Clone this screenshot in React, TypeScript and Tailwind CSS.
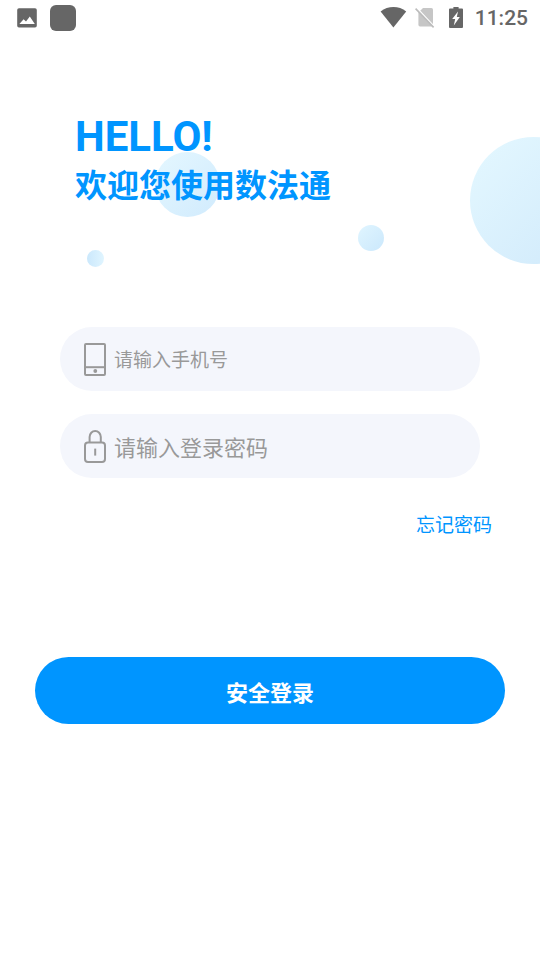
import React, { useState } from 'react';

const StatusBar: React.FC = () => (
  <div className="flex items-center justify-between h-9 pl-4 pr-3 text-[#666666]">
    <div className="flex items-center gap-3">
      <svg className="w-[22px] h-[22px]" viewBox="0 0 22 22" fill="currentColor">
        <path
          fillRule="evenodd"
          d="M3 1.2h16a1.8 1.8 0 0 1 1.8 1.8v15.8a1.8 1.8 0 0 1-1.8 1.8H3a1.8 1.8 0 0 1-1.8-1.8V3A1.8 1.8 0 0 1 3 1.2zM3.4 17h15.4l-5-7.4-3.8 4.8-2.4-2.2z"
        />
      </svg>
      <div className="w-[26px] h-[26px] rounded-md bg-[#666666]" />
    </div>
    <div className="flex items-center">
      <svg className="w-[27px] h-[22px]" viewBox="0 0 27 22" fill="currentColor">
        <path d="M0.6 4.4C8 -1.4 19 -1.4 26.2 4.4L13.4 20.6z" />
      </svg>
      <svg className="w-5 h-[22px] ml-2" viewBox="0 0 20 22">
        <path d="M8 1h8.4a1.6 1.6 0 0 1 1.6 1.6v15.2a1.6 1.6 0 0 1-1.6 1.6H5a1.6 1.6 0 0 1-1.6-1.6V5.4z" fill="#c6c6c6" />
        <path d="M1.8 1L19.2 19.6" stroke="#ffffff" strokeWidth="1.6" />
        <path d="M0.6 1.6L18.6 20.4" stroke="#bcbcbc" strokeWidth="1.6" />
      </svg>
      <svg className="w-3.5 h-[22px] ml-3.5" viewBox="0 0 14 22" fill="currentColor">
        <path
          fillRule="evenodd"
          d="M4.4 -0.6h5.2v2h3.4a1 1 0 0 1 1 1V20a1 1 0 0 1-1 1H1a1 1 0 0 1-1-1V2.4a1 1 0 0 1 1-1h3.4zM9 4.4L3.2 12h3L4.8 18.4l6-8.4H7.8z"
        />
      </svg>
      <span className="ml-3 font-['Roboto',sans-serif] text-[21px] leading-6 font-medium">11:25</span>
    </div>
  </div>
);

const PhoneIcon: React.FC = () => (
  <svg className="w-[22px] h-[34px] shrink-0" viewBox="0 0 22 34" fill="none" stroke="#999999" strokeWidth="2">
    <rect x="1" y="2" width="20" height="31" rx="1" />
    <path d="M1 25.2h20" />
    <circle cx="11.3" cy="29" r="1.9" fill="#999999" stroke="none" />
  </svg>
);

const LockIcon: React.FC = () => (
  <svg className="w-[22px] h-[34px] shrink-0" viewBox="0 0 22 34" fill="none" stroke="#999999" strokeWidth="2">
    <rect x="1" y="13.6" width="20" height="19.4" rx="3" />
    <path d="M5.6 13.4V8a5.6 6 0 0 1 11.2 0v5.4" />
    <path d="M11.2 19.6v7" />
  </svg>
);

export default function App() {
  const [phone, setPhone] = useState<string>('');
  const [password, setPassword] = useState<string>('');

  return (
    <div className="min-h-screen bg-white overflow-hidden font-['Noto_Sans_CJK_SC',sans-serif]">
      <StatusBar />

      <header className="relative h-[291px] pt-[76px] pl-[75px] text-[#0095ff]">
        {/* 背景の丸 */}
        <div className="absolute left-[155px] top-[116px] size-[65px] rounded-full bg-linear-to-br from-[#e4f7ff] to-[#d1ebfd]" />
        <div className="absolute -right-[57px] top-[101px] size-[127px] rounded-full bg-linear-to-br from-[#e4f8ff] to-[#d0e9fb]" />
        <div className="absolute left-[358px] top-[189px] size-[26px] rounded-full bg-linear-to-br from-[#e0f5ff] to-[#cbe8fc]" />
        <div className="absolute left-[87px] top-[214px] size-[17px] rounded-full bg-linear-to-r from-[#cbe8fc] to-[#e0f5ff]" />

        <h1 className="relative">
          <span className="block font-['Roboto',sans-serif] text-[42px] leading-[50px] font-bold">HELLO!</span>
          <span className="block text-[32px] leading-[42px] font-bold">欢迎您使用数法通</span>
        </h1>
      </header>

      <form onSubmit={(e) => e.preventDefault()}>
        <div className="flex flex-col gap-[23px] mx-[60px]">
          <label className="flex items-center gap-2 h-16 px-6 rounded-full bg-[#f4f6fc]">
            <PhoneIcon />
            <input
              type="tel"
              aria-label="手机号"
              placeholder="请输入手机号"
              value={phone}
              onChange={(e) => setPhone(e.target.value)}
              className="flex-1 min-w-0 bg-transparent text-[19px] leading-8 text-[#333333] placeholder:text-[#999999] focus:outline-none"
            />
          </label>
          <label className="flex items-center gap-2 h-16 px-6 rounded-full bg-[#f4f6fc]">
            <LockIcon />
            <input
              type="password"
              aria-label="登录密码"
              placeholder="请输入登录密码"
              value={password}
              onChange={(e) => setPassword(e.target.value)}
              className="flex-1 min-w-0 bg-transparent text-[22px] leading-8 text-[#333333] placeholder:text-[#999999] focus:outline-none"
            />
          </label>
        </div>

        <div className="flex justify-end mt-[30px] pr-12">
          <a href="#forgot" className="text-[19px] leading-8 text-[#0095ff]">忘记密码</a>
        </div>

        <div className="mt-[117px] px-[35px]">
          <button type="submit" className="w-full h-[67px] rounded-full bg-[#0095ff] text-[22px] leading-8 font-bold text-white">
            安全登录
          </button>
        </div>
      </form>
    </div>
  );
}
